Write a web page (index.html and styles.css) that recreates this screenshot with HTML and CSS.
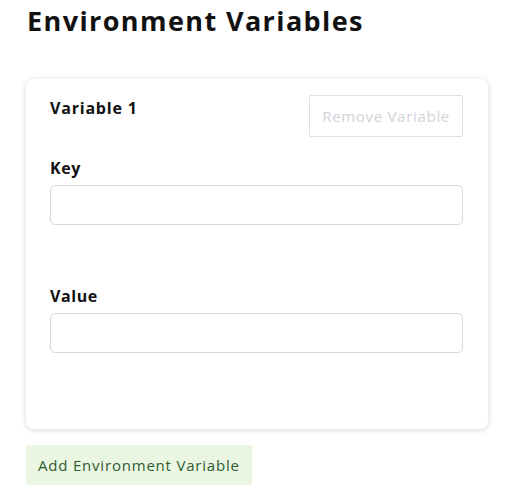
FILE: index.html
```html
<!DOCTYPE html>
<html>
<head>
<meta charset="utf-8">
<link rel="stylesheet" href="styles.css">
</head>
<body>
<div class="page">
  <h1 class="title">Environment Variables</h1>
  <div class="card">
    <div class="card-head">
      <div class="var-name">Variable 1</div>
      <button class="btn-remove" disabled>Remove Variable</button>
    </div>
    <div class="field">
      <label class="label">Key</label>
      <input class="input" type="text">
    </div>
    <div class="field">
      <label class="label">Value</label>
      <input class="input" type="text">
    </div>
  </div>
  <button class="btn-add">Add Environment Variable</button>
</div>
</body>
</html>
```
FILE: styles.css
```css
* { box-sizing: border-box; }
body {
  margin: 0;
  background: #fff;
  font-family: "Open Sans", "Noto Sans", sans-serif;
  color: #111;
}
.page {
  width: 462px;
  margin-left: 26px;
  padding-top: 2px;
}
.title {
  margin: 0;
  font-size: 27px;
  line-height: 38px;
  font-weight: 700;
  letter-spacing: 1.4px;
  padding-left: 1px;
}
.card {
  margin-top: 39px;
  background: #fff;
  border-radius: 8px;
  box-shadow: 0 1px 6px rgba(0,0,0,0.16);
  padding: 16px 25px 36px 24px;
}
.card-head {
  display: flex;
  justify-content: space-between;
  align-items: flex-start;
}
.var-name {
  font-weight: 700;
  font-size: 16px;
  line-height: 22px;
  letter-spacing: 0.8px;
  margin-top: 2px;
}
.btn-remove {
  height: 42px;
  padding: 0 12px;
  background: #fff;
  border: 1px solid #dcdfe3;
  border-radius: 2px;
  color: #cfd3d8;
  font-family: "Open Sans", sans-serif;
  font-size: 15px;
  letter-spacing: 0.7px;
}
.field { display: flex; flex-direction: column; }
.label {
  font-weight: 700;
  font-size: 16px;
  line-height: 22px;
  letter-spacing: 0.6px;
  margin-top: 20px;
  margin-bottom: 6px;
}
.input {
  height: 40px;
  border: 1px solid #d6d9dd;
  border-radius: 5px;
  margin-bottom: 40px;
}
.btn-add {
  margin-top: 16px;
  height: 40px;
  padding: 0 12px;
  background: #eaf6e1;
  border: none;
  border-radius: 2px;
  color: #2e5c31;
  font-family: "Open Sans", sans-serif;
  font-size: 15px;
  letter-spacing: 0.8px;
}
```
